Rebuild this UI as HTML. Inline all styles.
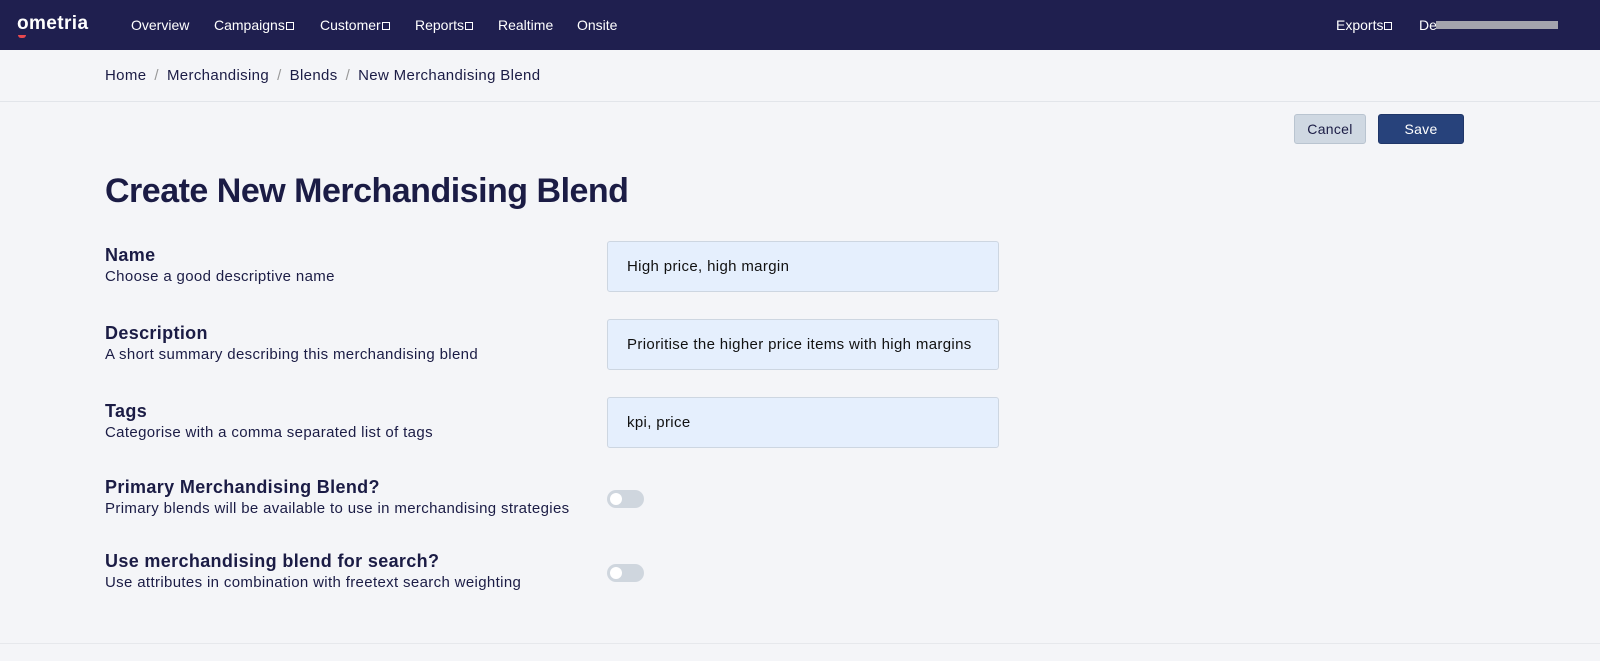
<!DOCTYPE html>
<html><head><meta charset="utf-8"><style>
*{margin:0;padding:0;box-sizing:border-box}
body{width:1600px;height:661px;background:#f4f5f8;font-family:"Liberation Sans",sans-serif;color:#1b1c45;position:relative;overflow:hidden}
.nav{position:absolute;left:0;top:0;width:1600px;height:50px;background:#1f1f4f}
.nav span{position:absolute;top:17px;color:#fff;font-size:14px}
.logo{position:absolute;left:17px;top:13px;color:#fff;font-size:19px;font-weight:bold;letter-spacing:0.4px}
.logo i{position:absolute;left:1px;top:22px;width:8px;height:3px;border-radius:0 0 4px 4px;background:#e8484f}
.sq{display:inline-block;width:8px;height:8px;border:1px solid #fff;margin-left:1px;vertical-align:0}
.bc{position:absolute;left:105px;top:67px;font-size:15px;letter-spacing:0.35px;color:#1b1c45}
.bc b{font-weight:normal;color:#999;margin:0 8px}
.line{position:absolute;left:0;top:101px;width:1600px;height:1px;background:#e2e5ea}
.btn{position:absolute;top:114px;height:30px;border-radius:3px;font-size:14px;text-align:center;line-height:28px;letter-spacing:0.3px}
h1{position:absolute;left:105px;top:172px;font-size:34px;font-weight:bold;color:#1b1c45;letter-spacing:-0.5px}
.lab{position:absolute;left:105px}
.lab .t{font-size:18px;font-weight:bold;letter-spacing:0.35px}
.lab .d{font-size:15px;margin-top:2px;letter-spacing:0.35px}
.in{position:absolute;left:607px;width:392px;height:51px;background:#e5effd;border:1px solid #cdd6e1;border-radius:3px;padding:0 19px;line-height:49px;font-size:15px;letter-spacing:0.35px;color:#111;white-space:nowrap}
.tg{position:absolute;left:607px;width:37px;height:18px;border-radius:9px;background:#cfd6de}
.tg i{position:absolute;left:3px;top:3px;width:12px;height:12px;border-radius:50%;background:#fff}
.foot{position:absolute;left:0;top:643px;width:1600px;height:18px;border-top:1px solid #e6e8ec;background:#f4f5f8}
</style></head><body>
<div class="nav">
<div class="logo">ometria<i></i></div>
<span style="left:131px">Overview</span>
<span style="left:214px">Campaigns<i class="sq"></i></span>
<span style="left:320px">Customer<i class="sq"></i></span>
<span style="left:415px">Reports<i class="sq"></i></span>
<span style="left:498px">Realtime</span>
<span style="left:577px">Onsite</span>
<span style="left:1336px">Exports<i class="sq"></i></span>
<span style="left:1419px">De</span>
<div style="position:absolute;left:1436px;top:21px;width:122px;height:8px;background:#a4a4ae"></div>
</div>
<div class="bc">Home<b>/</b>Merchandising<b>/</b>Blends<b>/</b>New Merchandising Blend</div>
<div class="line"></div>
<div class="btn" style="left:1294px;width:72px;background:#cfd8e2;border:1px solid #b9c4d0;color:#1b1c45">Cancel</div>
<div class="btn" style="left:1378px;width:86px;background:#27427b;border:1px solid #1f3668;color:#fff">Save</div>
<h1>Create New Merchandising Blend</h1>
<div class="lab" style="top:245px"><div class="t">Name</div><div class="d">Choose a good descriptive name</div></div>
<div class="lab" style="top:323px"><div class="t">Description</div><div class="d">A short summary describing this merchandising blend</div></div>
<div class="lab" style="top:401px"><div class="t">Tags</div><div class="d">Categorise with a comma separated list of tags</div></div>
<div class="lab" style="top:477px"><div class="t">Primary Merchandising Blend?</div><div class="d">Primary blends will be available to use in merchandising strategies</div></div>
<div class="lab" style="top:551px"><div class="t">Use merchandising blend for search?</div><div class="d">Use attributes in combination with freetext search weighting</div></div>
<div class="in" style="top:241px">High price, high margin</div>
<div class="in" style="top:319px">Prioritise the higher price items with high margins</div>
<div class="in" style="top:397px">kpi, price</div>
<div class="tg" style="top:490px"><i></i></div>
<div class="tg" style="top:564px"><i></i></div>
<div class="foot"></div>
</body></html>
